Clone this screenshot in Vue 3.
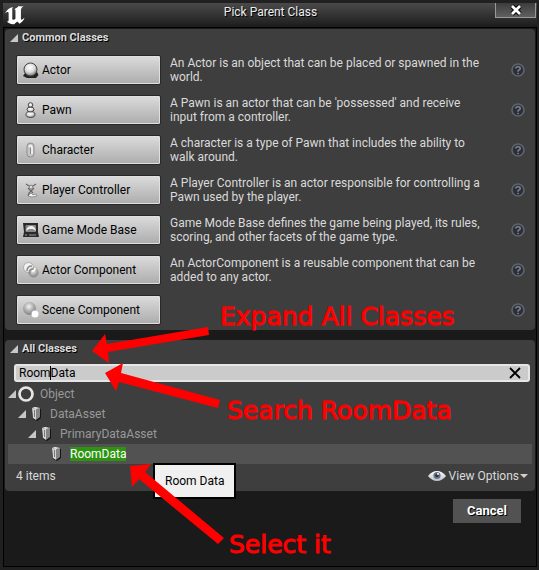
<script setup>
import { ref } from 'vue'

const search = ref('RoomData')

const classes = [
  { icon: 'actor', name: 'Actor', text: 'An Actor is an object that can be placed or spawned in the world.' },
  { icon: 'pawn', name: 'Pawn', text: "A Pawn is an actor that can be 'possessed' and receive input from a controller." },
  { icon: 'character', name: 'Character', text: 'A character is a type of Pawn that includes the ability to walk around.' },
  { icon: 'controller', name: 'Player Controller', text: 'A Player Controller is an actor responsible for controlling a Pawn used by the player.' },
  { icon: 'gamemode', name: 'Game Mode Base', text: 'Game Mode Base defines the game being played, its rules, scoring, and other facets of the game type.' },
  { icon: 'component', name: 'Actor Component', text: 'An ActorComponent is a reusable component that can be added to any actor.' },
  { icon: 'scene', name: 'Scene Component', text: '' }
]

const tree = [
  { name: 'Object', depth: 0 },
  { name: 'DataAsset', depth: 1 },
  { name: 'PrimaryDataAsset', depth: 2 },
  { name: 'RoomData', depth: 3 }
]
</script>

<template>
  <main class="window">
    <svg class="defs" width="0" height="0" aria-hidden="true">
      <defs>
        <radialGradient id="ball" cx=".45" cy=".35" r=".65">
          <stop offset="0" stop-color="#fff" />
          <stop offset=".55" stop-color="#dcdcdc" />
          <stop offset="1" stop-color="#777" />
        </radialGradient>
        <radialGradient id="dull" cx=".45" cy=".35" r=".65">
          <stop offset="0" stop-color="#f4f4f4" />
          <stop offset=".5" stop-color="#b4b4b4" />
          <stop offset="1" stop-color="#808080" />
        </radialGradient>
        <linearGradient id="eye" x1="0" y1="0" x2="0" y2="1">
          <stop offset="0" stop-color="#fff" />
          <stop offset="1" stop-color="#b9bec8" />
        </linearGradient>
      </defs>
    </svg>

    <header class="titlebar">
      <svg class="logo" viewBox="0 0 24 22" width="22" height="20" aria-hidden="true">
        <path fill="#fff" d="M1 8C3 4 6 1.500 10 1C9 2 9 3 9 4V14C9 15.500 11 15.500 12.500 14V5C12.500 4 12 3.500 11 3.500C13 2.500 15 1.500 16 0C17.500 .5 19.500 .8 21.500 0C19.500 1.500 18.500 3 18.500 5V14C18.500 15.500 19.500 15.500 22.500 13C21.500 16 19.500 18 17 19.500L14.500 17L11 20C7.500 20.500 4.500 18.500 3 17C4.500 17 5 16.500 5 15V8C5 6 3.500 6 1 8Z" />
      </svg>
      <h1>Pick Parent Class</h1>
      <button class="close" aria-label="Close">
        <svg viewBox="0 0 12 12" width="12" height="12"><path d="M2 2L10 10M10 2L2 10" stroke="#000" stroke-width="4.600" /><path d="M2 2L10 10M10 2L2 10" stroke="#fff" stroke-width="2.800" /></svg>
      </button>
    </header>

    <div class="content">
      <section class="panel common">
        <h2><svg class="tri" viewBox="0 0 8 8" width="8" height="8"><path d="M8 0V8H0Z" fill="#c8c8c8" /></svg>Common Classes</h2>
        <ul class="classes">
          <li v-for="c in classes" :key="c.name">
            <button class="class-button">
              <svg viewBox="0 0 16 16" width="16" height="16" aria-hidden="true">
                <g v-if="c.icon === 'actor'">
                  <path d="M2 11L0 14L4 16H13L15.500 13L14 10Z" fill="#222" />
                  <circle cx="7.500" cy="7.500" r="6.500" fill="url(#ball)" stroke="#444" />
                </g>
                <g v-else-if="c.icon === 'pawn'" stroke="#4c4c4c" fill="url(#ball)">
                  <ellipse cx="7.500" cy="12.500" rx="4.500" ry="3" />
                  <ellipse cx="7.500" cy="7.500" rx="3.500" ry="2.500" />
                  <circle cx="7.500" cy="3" r="2.300" />
                </g>
                <g v-else-if="c.icon === 'character'">
                  <rect x="4" y="1" width="7" height="14" rx="3.500" fill="#c6c6c6" stroke="#8d8d8d" />
                  <path d="M6 5Q7.500 2 9 5V12" fill="none" stroke="#f7f7f7" stroke-width="1.500" />
                  <path d="M7.500 6V12" stroke="#888" />
                </g>
                <g v-else-if="c.icon === 'controller'">
                  <path d="M3 2L6 4H10L13 2M5 6L10 11M11 6L6 11L5 14" fill="none" stroke="#666" stroke-width="1.200" />
                  <circle cx="8" cy="5" r="1.800" fill="#ddd" stroke="#777" stroke-width=".8" />
                  <path d="M5 14L8 11L10 13L13 12L14 14L9 15Z" fill="#f4f4f4" stroke="#777" stroke-width=".7" />
                </g>
                <g v-else-if="c.icon === 'gamemode'">
                  <path d="M0 1H15V10L16 15H0L1 10Z" fill="#292929" />
                  <rect x="2.500" y="3" width="10.500" height="7" rx="1" fill="#888" />
                  <path d="M3 9Q4 4 8 4T13 9L10 7H6Z" fill="#eee" />
                  <path d="M2 13H4M6 13H13" stroke="#999" />
                </g>
                <g v-else-if="c.icon === 'component'">
                  <circle cx="5.500" cy="5.500" r="5" fill="#f2f2f2" stroke="#aaa" />
                  <circle cx="10.500" cy="10.500" r="5" fill="url(#dull)" />
                  <path d="M4 9Q4 4 9 4M7 12Q5 7 11 7" fill="none" stroke="#888" stroke-width="1.500" />
                  <path d="M9 9Q12 9 12 6" fill="none" stroke="#fff" stroke-width="1.500" />
                </g>
                <g v-else>
                  <circle cx="6.500" cy="6.500" r="6.500" fill="url(#dull)" />
                  <circle cx="12" cy="12" r="3.500" fill="#fff" />
                </g>
              </svg>
              {{ c.name }}
            </button>
            <p>{{ c.text }}</p>
            <button class="help" :aria-label="'Help: ' + c.name">
              <svg viewBox="0 0 14 14" width="14" height="14">
                <circle cx="7" cy="7" r="6" fill="#2b2e35" stroke="#5d636d" stroke-width="1.700" />
                <path d="M4.800 5.500Q5 3.600 7 3.600T9.200 5.400Q9.200 6.500 7.600 7.200Q7 7.500 7 8.700M7 9.700V11.200" fill="none" stroke="#737a86" stroke-width="1.800" />
              </svg>
            </button>
          </li>
        </ul>
      </section>

      <section class="panel all">
        <h2><svg class="tri" viewBox="0 0 8 8" width="8" height="8"><path d="M8 0V8H0Z" fill="#c8c8c8" /></svg>All Classes</h2>
        <div class="search">
          <input v-model="search" type="text" aria-label="Search classes">
          <span class="caret"></span>
          <button aria-label="Clear search">
            <svg viewBox="0 0 12 12" width="12" height="12"><path d="M1 1L11 11M11 1L1 11" stroke="#000" stroke-width="1.800" /></svg>
          </button>
        </div>
        <ul class="tree">
          <li v-for="n in tree" :key="n.name" :class="['depth-' + n.depth, { selected: n.depth === 3 }]">
            <svg class="tri" viewBox="0 0 8 8" width="8" height="8"><path v-if="n.depth < 3" d="M8 0V8H0Z" fill="#c8c8c8" /></svg>
            <svg v-if="n.depth === 0" viewBox="0 0 16 16" width="16" height="16"><circle cx="8" cy="8" r="6.500" fill="none" stroke="#e6e6e6" stroke-width="2.700" /></svg>
            <svg v-else viewBox="0 0 16 16" width="16" height="16">
              <path d="M4 3L6 2L13 3V12L9 15L5 13Z" fill="#141414" />
              <path d="M4 2L8 3V14L5 12Z" fill="#d4d4d4" />
              <path d="M8 3L12 2V11L8 14Z" fill="#858585" />
              <path d="M4 2L7 1L12 2L8 3Z" fill="#f4f4f4" />
              <path d="M6.500 4V11" stroke="#777" />
            </svg>
            <span>{{ n.name }}</span>
          </li>
        </ul>
        <footer class="status">
          <span>4 items</span>
          <button class="view">
            <svg viewBox="0 0 18 12" width="18" height="12">
              <path d="M0 6Q4 1 9 1T18 6Q14 11 9 11T0 6Z" fill="url(#eye)" />
              <circle cx="9" cy="5.500" r="3.600" fill="#69758c" />
              <circle cx="9" cy="5.500" r="1.800" fill="#2b3341" />
              <circle cx="10" cy="4" r="1" fill="#fff" />
            </svg>
            View Options
            <svg class="down" viewBox="0 0 8 4" width="8" height="4"><path d="M0 0H8L4 4Z" fill="#d0d0d0" /></svg>
          </button>
        </footer>
      </section>

      <div class="actions"><button class="cancel">Cancel</button></div>
    </div>

    <div class="tooltip" role="tooltip">Room Data</div>
    <svg class="arrows" viewBox="0 0 539 570" width="539" height="570" aria-hidden="true">
      <g fill="#f00">
        <path d="M92 351L105 334L107 344L208 327L209 335L108 352L109 363Z" />
        <path d="M105 373L123 363L121 373L220 400L218 408L119 382L116 391Z" />
        <path d="M130 466L151 464L145 472L224 538L218 544L139 479L132 487Z" />
      </g>
    </svg>
    <span class="note expand">Expand All Classes</span>
    <span class="note find">Search RoomData</span>
    <span class="note pick">Select it</span>
  </main>
</template>

<style>
body { margin: 0; background: #1a1a1a; }
</style>

<style scoped>
* { box-sizing: border-box; }
button, input { font: inherit; color: inherit; border: 0; padding: 0; background: none; }
svg { display: block; flex: none; }
ul { list-style: none; margin: 0; padding: 0; }
h1, h2, p { margin: 0; font-weight: 400; }
.defs { position: absolute; }
.window {
  position: relative;
  min-height: 100vh;
  padding: 3px 2px 3px 3px;
  background: #202020;
  font: 12px/14px Roboto, sans-serif;
  color: #dadada;
}
.titlebar {
  display: grid;
  grid-template-columns: 43px 1fr 42px;
  align-items: start;
  height: 24px;
  background: linear-gradient(#4a4a4a, #383838 40%, #1c1c1c);
}
.logo { margin-top: 3px; margin-left: 1px; }
h1 { font-size: 12px; line-height: 18px; text-align: center; color: #eee; text-shadow: 1px 1px #000; }
.close {
  height: 15px;
  margin-right: 1px;
  display: grid;
  place-items: center;
  border: 1px solid #999;
  border-top: 0;
  background: linear-gradient(#3c3c3c, #606060);
}
.content {
  border: 1px solid #000;
  padding: 1px;
  min-height: calc(100vh - 30px);
  background: #1a1a1a;
}
.panel { background: #3e3e3e; border-radius: 4px; }
.common { padding-bottom: 6px; }
h2 {
  display: flex;
  align-items: center;
  gap: 4px;
  height: 18px;
  padding-left: 5px;
  font-size: 11px;
  font-weight: 700;
  color: #ddd;
  text-shadow: 1px 1px #000;
}
.classes { display: grid; gap: 12px; padding: 9px 10px 0 11px; }
.classes li { display: grid; grid-template-columns: 145px 1fr 14px; align-items: center; column-gap: 9px; height: 28px; }
.classes p { max-width: 312px; }
.class-button {
  display: flex;
  align-items: center;
  gap: 3px;
  height: 30px;
  margin: -1px 0;
  padding-left: 6px;
  border: 1px solid #282828;
  border-radius: 2px;
  background: linear-gradient(#dcdcdc, #acacac);
  box-shadow: inset 0 0 0 1px #e0e0e0;
  color: #000;
}
.all { margin-top: 10px; }
.search {
  position: relative;
  display: flex;
  align-items: center;
  margin: 6px 5px 0 9px;
  height: 18px;
  border: 2px solid #e6e6e6;
  border-radius: 3px;
  background: #cbcbcb;
  color: #000;
}
.search input { flex: 1; min-width: 0; height: 14px; padding-left: 3px; outline: 0; }
.search button { margin-right: 7px; }
.caret { position: absolute; left: 34px; top: 0; width: 1px; height: 14px; background: #000; }
.tree { margin: 2px 3px 0 3px; }
.tree li { display: flex; align-items: center; gap: 2px; height: 20px; color: #999; }
.tree li span { margin-left: 4px; }
.depth-1 { padding-left: 10px; }
.depth-2 { padding-left: 20px; }
.depth-3 { padding-left: 30px; }
.tree .selected { background: #525252; color: #fff; }
.selected span { background: #2c9410; }
.status { display: flex; justify-content: space-between; align-items: center; height: 27px; padding: 0 7px 3px 11px; }
.view { display: flex; align-items: center; gap: 3px; }
.view .down { margin-left: -2px; }
.actions { display: flex; justify-content: flex-end; padding: 8px 14px; }
.cancel { width: 68px; height: 24px; background: #525252; color: #fff; font-size: 13px; font-weight: 700; text-shadow: 1px 1px #000; }
.tooltip {
  position: absolute;
  left: 153px;
  top: 463px;
  padding: 9px 10px;
  border: 2px solid #000;
  background: #f0f0f0;
  color: #000;
  line-height: 14px;
}
.arrows { position: absolute; left: 0; top: 0; pointer-events: none; }
.note { position: absolute; font: 25px/28px "DejaVu Sans", sans-serif; color: #f00; -webkit-text-stroke: 1px #f00; white-space: nowrap; }
.expand { left: 220px; top: 303px; }
.find { left: 227px; top: 397px; }
.pick { left: 229px; top: 531px; }
</style>
